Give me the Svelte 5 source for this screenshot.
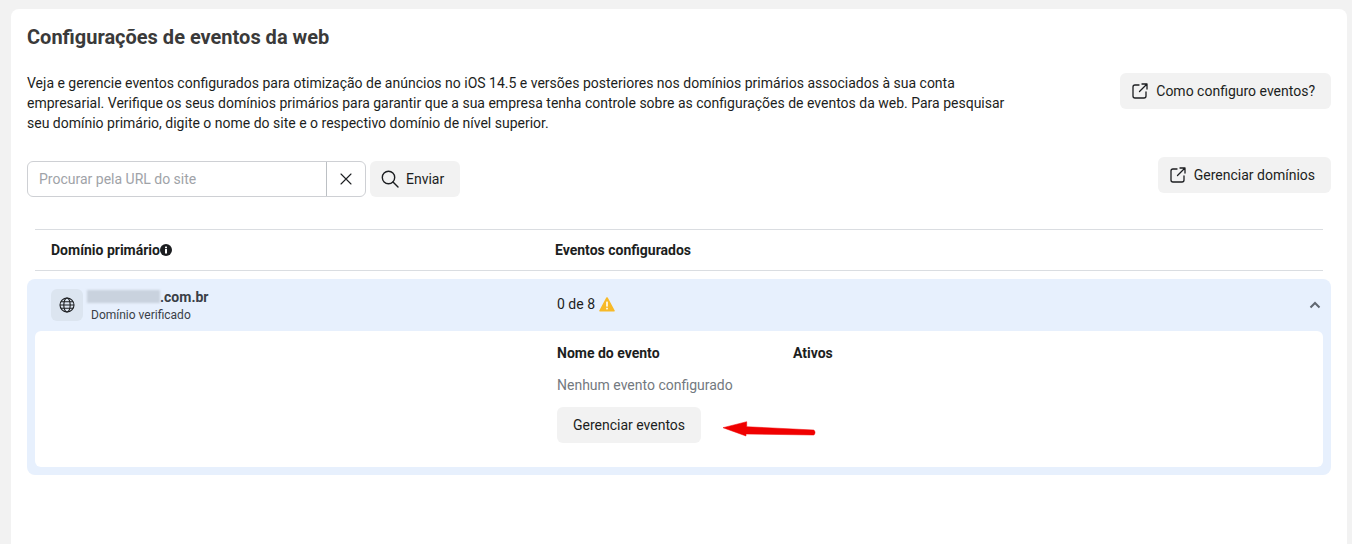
<script>
  const description =
    'Veja e gerencie eventos configurados para otimização de anúncios no iOS 14.5 e versões posteriores nos domínios primários associados à sua conta empresarial. Verifique os seus domínios primários para garantir que a sua empresa tenha controle sobre as configurações de eventos da web. Para pesquisar seu domínio primário, digite o nome do site e o respectivo domínio de nível superior.';
</script>

{#snippet externalIcon()}
  <svg class="icon" width="16" height="16" viewBox="0 0 16 16" fill="none" stroke="#1c1e21" stroke-width="1.3" stroke-linecap="round" stroke-linejoin="round">
    <path d="M7 2H3a2 2 0 0 0-2 2v9a2 2 0 0 0 2 2h9a2 2 0 0 0 2-2V9" />
    <path d="M10 1h5v5M15 1 7.5 8.5" />
  </svg>
{/snippet}

<main class="card">
  <h1>Configurações de eventos da web</h1>

  <div class="intro">
    <p>{description}</p>
    <button class="btn help">
      {@render externalIcon()}
      Como configuro eventos?
    </button>
  </div>

  <div class="toolbar">
    <div class="search">
      <input type="text" placeholder="Procurar pela URL do site" />
      <button class="clear" aria-label="Limpar">
        <svg width="12" height="12" viewBox="0 0 12 12" stroke="#1c1e21" stroke-width="1.1" stroke-linecap="round">
          <path d="M1 1l10 10M11 1 1 11" />
        </svg>
      </button>
    </div>
    <button class="btn send">
      <svg class="icon" width="18" height="18" viewBox="0 0 18 18" fill="none" stroke="#1c1e21" stroke-width="1.4" stroke-linecap="round">
        <circle cx="7.5" cy="7.5" r="6.2" />
        <path d="M12 12l5 5" />
      </svg>
      Enviar
    </button>
    <button class="btn domains">
      {@render externalIcon()}
      Gerenciar domínios
    </button>
  </div>

  <div class="table-head">
    <div class="col-domain">
      Domínio primário<svg width="12" height="12" viewBox="0 0 12 12"><circle cx="6" cy="6" r="6" fill="#1c1e21" /><rect x="5" y="5" width="2" height="4.5" fill="#fff" /><rect x="5" y="2.6" width="2" height="1.6" fill="#fff" /></svg>
    </div>
    <div>Eventos configurados</div>
  </div>

  <section class="accordion">
    <div class="row">
      <div class="domain">
        <div class="globe">
          <svg width="16" height="16" viewBox="0 0 16 16" fill="none" stroke="#1c1e21" stroke-width="1.1">
            <circle cx="8" cy="8" r="7" />
            <ellipse cx="8" cy="8" rx="3.2" ry="7" />
            <path d="M1 8h14M1.9 4.8h12.2M1.9 11.2h12.2" />
          </svg>
        </div>
        <div class="domain-text">
          <div class="domain-name"><span class="blur"></span>.com.br</div>
          <div class="domain-status">Domínio verificado</div>
        </div>
      </div>
      <div class="count">
        0 de 8
        <svg width="16" height="15" viewBox="0 0 16 15">
          <path d="M8 1 15 13.8H1Z" fill="#f7b928" stroke="#f7b928" stroke-width="1.6" stroke-linejoin="round" />
          <rect x="7.2" y="4.6" width="1.6" height="5" fill="#fff" />
          <rect x="7.2" y="10.8" width="1.6" height="1.6" fill="#fff" />
        </svg>
      </div>
      <svg class="chevron" width="12" height="8" viewBox="0 0 12 8" fill="none" stroke="#606770" stroke-width="2">
        <path d="M1.5 6.5 6 2l4.5 4.5" />
      </svg>
    </div>

    <div class="panel">
      <div class="events">
        <div class="events-head">
          <div class="events-name">Nome do evento</div>
          <div>Ativos</div>
        </div>
        <div class="empty">Nenhum evento configurado</div>
        <div class="manage">
          <button class="btn plain">Gerenciar eventos</button>
          <svg class="arrow" width="94" height="22" viewBox="0 0 94 22">
            <path d="M1 11.7 24.7 5.7 24.7 10.7 91.5 14C93.5 14.3 93.5 18.8 91.5 19L24 18 24 20Z" fill="#f00000" stroke="#f00000" stroke-width="0.5" stroke-linejoin="round" />
          </svg>
        </div>
      </div>
    </div>
  </section>
</main>

<style>
  :global(body) {
    background: #f2f2f2;
    font-family: Roboto, "Liberation Sans", sans-serif;
    color: #1c1e21;
  }

  .card {
    box-sizing: border-box;
    height: 535px;
    margin: 9px 5px 0 11px;
    padding: 16px 16px 0;
    background: #fff;
    border-radius: 8px 8px 0 0;
    font-size: 14px;
    line-height: 20px;
  }

  h1 {
    margin: 0;
    font-size: 20px;
    line-height: 24px;
    font-weight: 700;
    color: #3a3a3a;
  }

  .intro {
    display: flex;
    justify-content: space-between;
    align-items: flex-start;
    margin-top: 24px;
  }

  .intro p {
    width: 985px;
    margin: 0;
  }

  .btn {
    display: inline-flex;
    align-items: center;
    gap: 8px;
    height: 36px;
    padding: 0 16px 0 12px;
    border: none;
    border-radius: 6px;
    background: #f2f2f2;
    color: #1c1e21;
    font: 14px/20px Roboto, "Liberation Sans", sans-serif;
    cursor: pointer;
  }

  .btn.plain {
    width: 144px;
    padding: 0;
    justify-content: center;
  }

  .toolbar {
    position: relative;
    display: flex;
    align-items: flex-start;
    gap: 4px;
    margin-top: 28px;
  }

  .search {
    display: flex;
    width: 339px;
    height: 36px;
    box-sizing: border-box;
    border: 1px solid #ced0d4;
    border-radius: 6px;
  }

  .search input {
    flex: 1;
    min-width: 0;
    padding: 0 11px;
    border: none;
    border-right: 1px solid #bcc0c4;
    border-radius: 6px 0 0 6px;
    background: transparent;
    outline: none;
    font: 14px Roboto, "Liberation Sans", sans-serif;
  }

  .search input::placeholder {
    color: #a0a3a8;
    opacity: 1;
  }

  .clear {
    display: flex;
    align-items: center;
    justify-content: center;
    width: 38px;
    padding: 0;
    border: none;
    background: none;
  }

  .send {
    gap: 7px;
    padding: 0 16px 0 11px;
  }

  .domains {
    margin-left: auto;
    margin-top: -4px;
  }

  .table-head {
    display: flex;
    align-items: center;
    height: 40px;
    margin: 32px 8px 0;
    padding-left: 16px;
    border-top: 1px solid #dadde1;
    border-bottom: 1px solid #dadde1;
    font-weight: 700;
  }

  .col-domain {
    display: flex;
    align-items: center;
    width: 504px;
  }

  .accordion {
    margin-top: 8px;
    padding: 0 8px 8px;
    background: #e7f0fd;
    border-radius: 8px;
  }

  .row {
    display: flex;
    align-items: center;
    height: 52px;
    padding-left: 16px;
  }

  .domain {
    display: flex;
    align-items: center;
    gap: 8px;
    width: 506px;
  }

  .globe {
    display: flex;
    align-items: center;
    justify-content: center;
    width: 32px;
    height: 32px;
    border-radius: 6px;
    background: #dce5f0;
  }

  .domain-name {
    display: flex;
    align-items: center;
    height: 18px;
    font-weight: 700;
    color: #3a3f47;
  }

  .blur {
    width: 73px;
    height: 13px;
    margin-left: -4px;
    background: #c9d2de;
    filter: blur(1px);
  }

  .domain-status {
    margin-top: 1px;
    font-size: 12px;
    line-height: 16px;
    color: #3a3f47;
  }

  .count {
    display: flex;
    align-items: center;
    gap: 4px;
    flex: 1;
    margin-top: -2px;
  }

  .chevron {
    margin-right: 2px;
  }

  .panel {
    height: 136px;
    box-sizing: border-box;
    padding: 12px 0 0 522px;
    background: #fff;
    border-radius: 6px;
  }

  .events-head {
    display: flex;
    font-weight: 700;
  }

  .events-name {
    width: 236px;
  }

  .empty {
    margin-top: 12px;
    color: #737980;
  }

  .manage {
    position: relative;
    margin-top: 12px;
  }

  .arrow {
    position: absolute;
    left: 165px;
    top: 9px;
  }
</style>
